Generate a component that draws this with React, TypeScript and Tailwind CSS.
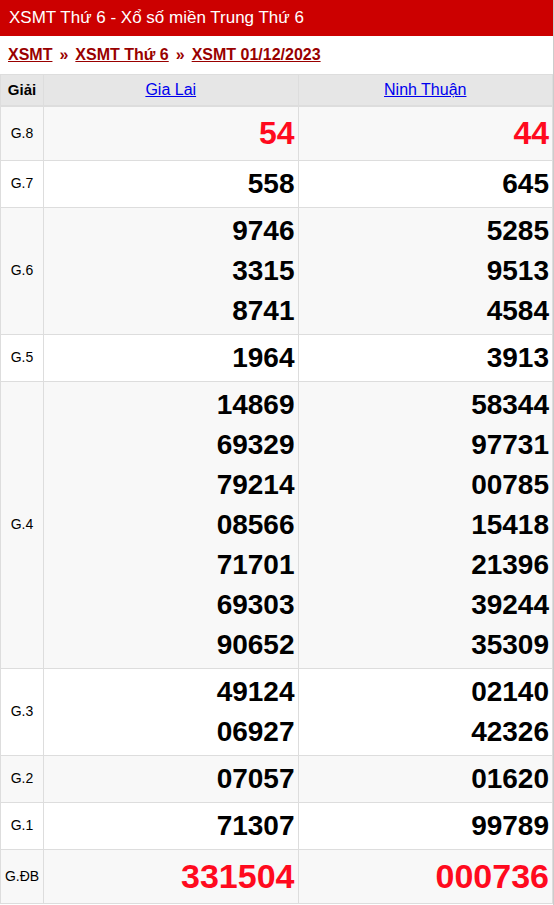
const rows: { label: string; a: string[]; b: string[]; size?: 'g8' | 'db' }[] = [
  { label: 'G.8', a: ['54'], b: ['44'], size: 'g8' },
  { label: 'G.7', a: ['558'], b: ['645'] },
  { label: 'G.6', a: ['9746', '3315', '8741'], b: ['5285', '9513', '4584'] },
  { label: 'G.5', a: ['1964'], b: ['3913'] },
  {
    label: 'G.4',
    a: ['14869', '69329', '79214', '08566', '71701', '69303', '90652'],
    b: ['58344', '97731', '00785', '15418', '21396', '39244', '35309'],
  },
  { label: 'G.3', a: ['49124', '06927'], b: ['02140', '42326'] },
  { label: 'G.2', a: ['07057'], b: ['01620'] },
  { label: 'G.1', a: ['71307'], b: ['99789'] },
  { label: 'G.ĐB', a: ['331504'], b: ['000736'], size: 'db' },
]

function numClass(size?: 'g8' | 'db') {
  if (size === 'g8') return 'text-[32px] leading-[47px] font-bold text-[#ff0a1e]'
  if (size === 'db') return 'text-[34px] leading-[47px] font-bold text-[#ff0a1e]'
  return 'text-[28px] leading-[40px] font-bold text-black'
}

function Cell({ nums, size }: { nums: string[]; size?: 'g8' | 'db' }) {
  return (
    <td className="border border-[#ddd] px-[3px] py-[3px] text-right align-middle">
      {nums.map((n) => (
        <div key={n} className={numClass(size)}>
          {n}
        </div>
      ))}
    </td>
  )
}

export default function App() {
  return (
    <div className="min-h-screen bg-white border-r border-[#ccc]" style={{ fontFamily: '"Liberation Sans", Arial, sans-serif' }}>
      <h1 className="bg-[#cc0000] text-white text-[17px] leading-[36px] px-[9px] font-normal">
        XSMT Thứ 6 - Xổ số miền Trung Thứ 6
      </h1>
      <div className="h-[38px] flex items-center px-[8px] text-[16px] font-bold text-[#990000]">
        <a href="#" className="underline">XSMT</a>
        <span className="mx-[7px]">»</span>
        <a href="#" className="underline">XSMT Thứ 6</a>
        <span className="mx-[7px]">»</span>
        <a href="#" className="underline">XSMT 01/12/2023</a>
      </div>
      <table className="w-full border-collapse table-fixed">
        <colgroup>
          <col className="w-[43px]" />
          <col />
          <col />
        </colgroup>
        <thead>
          <tr className="bg-[#e6e6e6] h-[31px]">
            <th className="border border-[#ddd] border-b-2 text-[15px] font-bold text-black">Giải</th>
            <th className="border border-[#ddd] border-b-2 text-[16px] font-normal">
              <a href="#" className="text-[#0000ee] underline">Gia Lai</a>
            </th>
            <th className="border border-[#ddd] border-b-2 text-[16px] font-normal">
              <a href="#" className="text-[#0000ee] underline">Ninh Thuận</a>
            </th>
          </tr>
        </thead>
        <tbody>
          {rows.map((r, i) => (
            <tr key={r.label} className={i % 2 === 0 ? 'bg-[#f8f8f8]' : 'bg-white'}>
              <td className="border border-[#ddd] text-[14px] text-black text-center align-middle">{r.label}</td>
              <Cell nums={r.a} size={r.size} />
              <Cell nums={r.b} size={r.size} />
            </tr>
          ))}
        </tbody>
      </table>
    </div>
  )
}
